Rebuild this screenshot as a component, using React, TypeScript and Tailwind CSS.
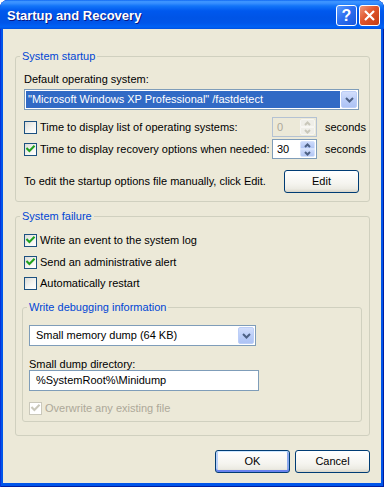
import type { ReactNode } from "react";

const FONT = "font-['Liberation_Sans',Arial,sans-serif]";

function Check({ checked, disabled }: { checked?: boolean; disabled?: boolean }) {
  const box = disabled
    ? "border-[#CAC8BB] bg-white"
    : "border-[#1C5180] bg-[linear-gradient(135deg,#DCDCD7_0%,#F4F4F0_55%,#FFFFFF_100%)]";
  return (
    <span className={`flex h-[13px] w-[13px] shrink-0 items-center justify-center border ${box}`}>
      {checked && (
        <svg width="11" height="11" viewBox="0 0 11 11">
          <path
            d="M2.2 4.8 L4.4 7 L8.8 2.6"
            fill="none"
            stroke={disabled ? "#CAC8BB" : "#21A121"}
            strokeWidth="2.1"
            strokeLinecap="square"
          />
        </svg>
      )}
    </span>
  );
}

function CheckRow({
  label,
  checked,
  disabled,
  className = "",
}: {
  label: string;
  checked?: boolean;
  disabled?: boolean;
  className?: string;
}) {
  return (
    <div className={`flex h-[13px] items-center gap-[3px] whitespace-nowrap ${className}`}>
      <Check checked={checked} disabled={disabled} />
      <span className={`leading-[13px] ${disabled ? "text-[#ACA899]" : ""}`}>{label}</span>
    </div>
  );
}

function Chevron({ color, down = true, w = 9, h = 6 }: { color: string; down?: boolean; w?: number; h?: number }) {
  return (
    <svg width={w} height={h} viewBox={`0 0 ${w} ${h}`}>
      <path
        d={down ? `M1 1 L${w / 2} ${h - 1.5} L${w - 1} 1` : `M1 ${h - 1} L${w / 2} 1.5 L${w - 1} ${h - 1}`}
        fill="none"
        stroke={color}
        strokeWidth="2"
      />
    </svg>
  );
}

function ComboArrow() {
  return (
    <div className="flex w-[16px] shrink-0 items-center justify-center rounded-[2px] border border-[#BCCEF7] bg-[linear-gradient(to_bottom,#D2DEFC_0%,#BACDF8_55%,#ADC3F4_100%)]">
      <Chevron color="#4D6185" />
    </div>
  );
}

function Combo({ children, selected, className = "" }: { children: ReactNode; selected?: boolean; className?: string }) {
  return (
    <div className={`flex h-[21px] border border-[#7F9DB9] bg-white p-[1px] ${className}`}>
      <div
        className={`mr-[1px] flex-1 pl-[2px] leading-[17px] whitespace-nowrap ${
          selected ? "bg-[#316AC5] text-white" : "pl-[5px] text-black"
        }`}
      >
        {children}
      </div>
      <ComboArrow />
    </div>
  );
}

function Spin({ value, disabled }: { value: string; disabled?: boolean }) {
  const half = disabled
    ? "border-[#F7F6F2] bg-[#EFEEE8]"
    : "border-[#D6E2FC] bg-[linear-gradient(to_bottom,#CCDAFB,#B2C6F4)]";
  const arrow = disabled ? "#C9C7BA" : "#4D6185";
  return (
    <div
      className={`flex h-[20px] w-[45px] shrink-0 border p-[1px] ${
        disabled ? "border-[#B4C2D3] bg-[#ECE9D8] text-[#ACA899]" : "border-[#7F9DB9] bg-white text-black"
      }`}
    >
      <span className="flex-1 pl-[3px] leading-[16px]">{value}</span>
      <div className="flex w-[15px] flex-col">
        <div className={`flex flex-1 items-center justify-center rounded-t-[2px] border ${half}`}>
          <Chevron color={arrow} down={false} w={7} h={5} />
        </div>
        <div className={`flex flex-1 items-center justify-center rounded-b-[2px] border ${half}`}>
          <Chevron color={arrow} w={7} h={5} />
        </div>
      </div>
    </div>
  );
}

function XPButton({ children, isDefault }: { children: ReactNode; isDefault?: boolean }) {
  return (
    <button
      className={`h-[23px] w-[75px] shrink-0 rounded-[3px] border border-[#003C74] bg-[linear-gradient(to_bottom,#FFFFFF_0%,#F5F4EF_60%,#ECEBE3_85%,#D8D4C8_100%)] leading-[21px] text-black ${
        isDefault
          ? "shadow-[inset_0_1px_0_#CEE7FF,inset_0_-2px_0_#6982EE,inset_2px_0_0_#B9D1FA,inset_-2px_0_0_#8CAAEE]"
          : ""
      }`}
    >
      {children}
    </button>
  );
}

function Group({ label, children, className = "" }: { label: string; children: ReactNode; className?: string }) {
  return (
    <div className={`rounded-[3px] border border-[#D0D0BF] ${className}`}>
      <div className="-mt-[7px] ml-[4px] h-[13px] w-fit bg-[#ECE9D8] px-[2px] leading-[13px] text-[#0046D5]">
        {label}
      </div>
      {children}
    </div>
  );
}

export default function App() {
  return (
    <div className={`h-[487px] w-[384px] bg-white text-[11px] text-black ${FONT}`}>
      <div className="flex h-full flex-col overflow-hidden rounded-t-[8px] bg-[#0055EA] pb-[4px] shadow-[inset_1px_0_0_#0831D9,inset_-1px_0_0_#001EA0,inset_0_-1px_0_#001EA0]">
        {/* title bar */}
        <div className="flex h-[29px] shrink-0 items-center justify-between bg-[linear-gradient(to_bottom,#0058EE_0px,#3D95FF_1px,#3A91FF_3px,#1274F8_6px,#0058EE_11px,#0054E6_18px,#0056EA_23px,#0062F6_27px,#0050E0_29px)] pl-[7px] pr-[4px]">
          <span className="mt-[2px] text-[13px] font-bold text-white [text-shadow:1px_1px_0_#0A1883]">
            Startup and Recovery
          </span>
          <div className="mt-[2px] flex gap-[2px]">
            <div className="flex h-[21px] w-[21px] items-center justify-center rounded-[3px] border border-white bg-[linear-gradient(135deg,#5C9CFF_0%,#2D6FF0_45%,#1A56DC_100%)] text-[16px] leading-none font-bold text-white">
              ?
            </div>
            <div className="flex h-[21px] w-[21px] items-center justify-center rounded-[3px] border border-white bg-[linear-gradient(135deg,#F0977A_0%,#E0552C_45%,#C23C12_100%)]">
              <svg width="13" height="13" viewBox="0 0 13 13">
                <path d="M2 2 L11 11 M11 2 L2 11" stroke="white" strokeWidth="2.2" />
              </svg>
            </div>
          </div>
        </div>

        {/* client area */}
        <div className="mx-[3px] flex flex-1 flex-col bg-[#ECE9D8] pt-[27px] pr-[11px] pl-[12px]">
          <Group label="System startup">
            <div className="flex flex-col pr-[10px] pb-[8px] pl-[8px]">
              <div className="mt-[10px] h-[13px] leading-[13px]">Default operating system:</div>
              <Combo selected className="mt-[3px]">
                "Microsoft Windows XP Professional" /fastdetect
              </Combo>
              <div className="mt-[7px] flex items-center whitespace-nowrap">
                <div className="w-[248px] shrink-0">
                  <CheckRow label="Time to display list of operating systems:" />
                </div>
                <Spin value="0" disabled />
                <span className="ml-[8px] shrink-0">seconds</span>
              </div>
              <div className="mt-[2px] flex items-center whitespace-nowrap">
                <div className="w-[248px] shrink-0">
                  <CheckRow label="Time to display recovery options when needed:" checked />
                </div>
                <Spin value="30" />
                <span className="ml-[8px] shrink-0">seconds</span>
              </div>
              <div className="mt-[11px] flex items-center justify-between">
                <span>To edit the startup options file manually, click Edit.</span>
                <XPButton>Edit</XPButton>
              </div>
            </div>
          </Group>

          <Group label="System failure" className="mt-[14px]">
            <div className="flex flex-col pr-[7px] pb-[13px] pl-[6px]">
              <CheckRow label="Write an event to the system log" checked className="mt-[11px] ml-[2px]" />
              <CheckRow label="Send an administrative alert" checked className="mt-[9px] ml-[2px]" />
              <CheckRow label="Automatically restart" className="mt-[8px] ml-[2px]" />

              <Group label="Write debugging information" className="mt-[17px]">
                <div className="flex flex-col pb-[6px] pl-[6px]">
                  <Combo className="mt-[11px] w-[227px]">Small memory dump (64 KB)</Combo>
                  <div className="mt-[12px] h-[12px] leading-[12px]">Small dump directory:</div>
                  <div className="h-[21px] w-[230px] border border-[#7F9DB9] bg-white pl-[6px] leading-[19px]">
                    %SystemRoot%\Minidump
                  </div>
                  <CheckRow label="Overwrite any existing file" checked disabled className="mt-[11px]" />
                </div>
              </Group>
            </div>
          </Group>

          <div className="mt-[14px] flex justify-end gap-[5px]">
            <XPButton isDefault>OK</XPButton>
            <XPButton>Cancel</XPButton>
          </div>
        </div>
      </div>
    </div>
  );
}
